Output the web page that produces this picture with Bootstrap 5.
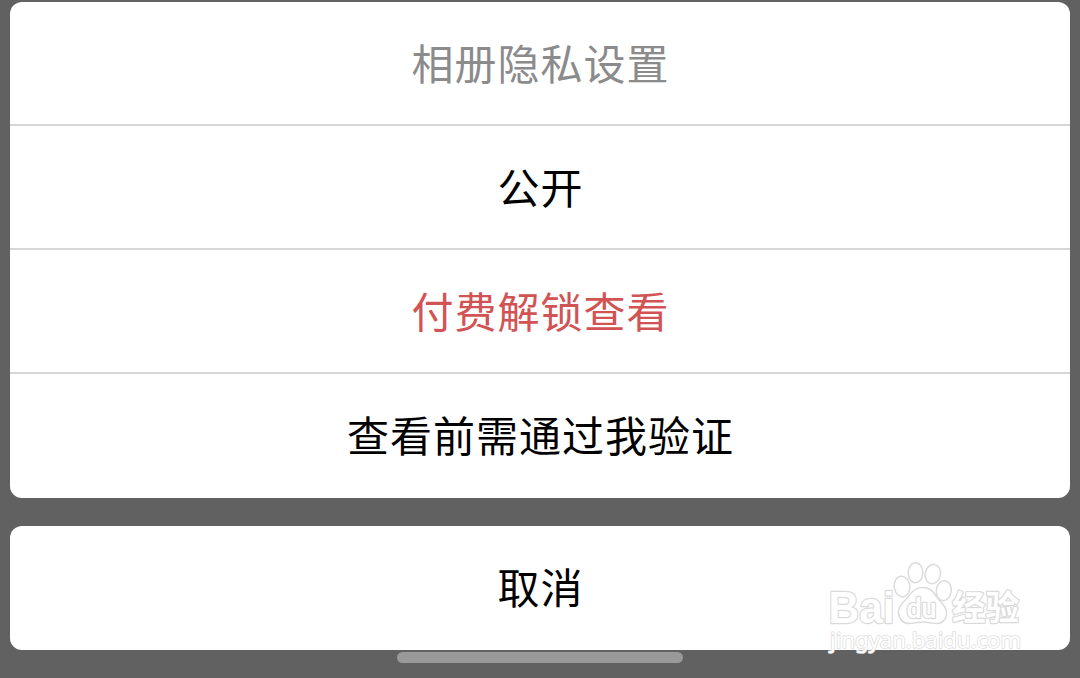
<!DOCTYPE html>
<html lang="zh-CN">
<head>
    <meta charset="UTF-8">
    <meta name="viewport" content="width=device-width, initial-scale=1.0">
    <title>相册隐私设置</title>
    <link href="https://cdn.jsdelivr.net/npm/bootstrap@5.3.0/dist/css/bootstrap.min.css" rel="stylesheet">
    <script defer src="https://cdn.jsdelivr.net/npm/bootstrap@5.3.0/dist/js/bootstrap.bundle.min.js"></script>
    <style>
        body {
            height: 678px;
            overflow: hidden;
            background-color: #616161;
            font-family: "Noto Sans CJK SC", sans-serif;
        }

        .action-sheet {
            padding: 2px 10px 0;
        }

        .sheet-group {
            --bs-list-group-border-radius: 12px;
        }

        .sheet-options {
            margin-bottom: 28px;
        }

        .sheet-item {
            height: 124px;
            padding: 0 0 2px 1px;
            border: 0;
            border-bottom: 2px solid #d6d6d6;
            background-color: #fff;
            color: #000;
            font-size: 42px;
            letter-spacing: 1px;
            line-height: 1;
        }

        .sheet-item:last-child {
            border-bottom-color: #fff;
        }

        .sheet-title {
            color: #8b8b8b;
        }

        .sheet-danger {
            color: #d25353;
        }

        .home-bar {
            width: 286px;
            height: 11px;
            margin-top: 2px;
            background-color: #999;
        }

        /* watermark lies over the cancel button */
        .watermark {
            left: 810px;
            top: 550px;
            pointer-events: none;
        }
    </style>
</head>
<body>
    <div class="action-sheet d-flex flex-column">
        <!-- options -->
        <div class="list-group sheet-group sheet-options">
            <div class="list-group-item sheet-item sheet-title d-flex align-items-center justify-content-center">相册隐私设置</div>
            <button type="button" class="list-group-item sheet-item d-flex align-items-center justify-content-center">公开</button>
            <button type="button" class="list-group-item sheet-item sheet-danger d-flex align-items-center justify-content-center">付费解锁查看</button>
            <button type="button" class="list-group-item sheet-item d-flex align-items-center justify-content-center">查看前需通过我验证</button>
        </div>
        <!-- cancel -->
        <div class="list-group sheet-group">
            <button type="button" class="list-group-item sheet-item d-flex align-items-center justify-content-center">取消</button>
        </div>
        <div class="home-bar rounded-pill align-self-center"></div>
    </div>

    <svg class="watermark position-absolute" width="230" height="128" viewBox="0 0 230 128" fill="#fff" stroke="#dadada" stroke-width="2.400" paint-order="stroke" stroke-linejoin="round">
        <text x="18.500" y="72.500" font-family="Liberation Sans, sans-serif" font-weight="700" font-size="45" textLength="66" lengthAdjust="spacingAndGlyphs">Bai</text>
        <!-- paw -->
        <g stroke="#dcdcdc" stroke-width="1.500" paint-order="normal">
            <ellipse cx="92" cy="36.500" rx="7.800" ry="10.300" transform="rotate(-8 92 36.500)"/>
            <ellipse cx="105.500" cy="22.700" rx="7.300" ry="10"/>
            <ellipse cx="122.800" cy="24" rx="7.600" ry="9.800" transform="rotate(12 122.800 24)"/>
            <ellipse cx="133.700" cy="40.700" rx="7.500" ry="10" transform="rotate(8 133.700 40.700)"/>
            <path d="M112 37.500C105 37.500 102 42 98 47C94 52 88.500 55 88.500 62C88.500 69 93 73.500 99 73.500C104 73.500 108 72 113 72C118 72 121 73.500 126 73.500C133 73.500 137 69 136.500 62C136 55 130 52 126 46C122 40 119 37.500 112 37.500Z"/>
        </g>
        <text x="96.500" y="68" font-family="Roboto, sans-serif" font-weight="500" font-size="27" textLength="30" lengthAdjust="spacingAndGlyphs">du</text>
        <text x="142" y="70" font-family="Noto Sans CJK SC, sans-serif" font-weight="700" font-size="34" textLength="67" lengthAdjust="spacingAndGlyphs">经验</text>
        <text x="20" y="98" font-family="Noto Sans, sans-serif" font-size="22" stroke="#dedede" stroke-width="1.600" textLength="191" lengthAdjust="spacingAndGlyphs">jingyan.baidu.com</text>
    </svg>
</body>
</html>
